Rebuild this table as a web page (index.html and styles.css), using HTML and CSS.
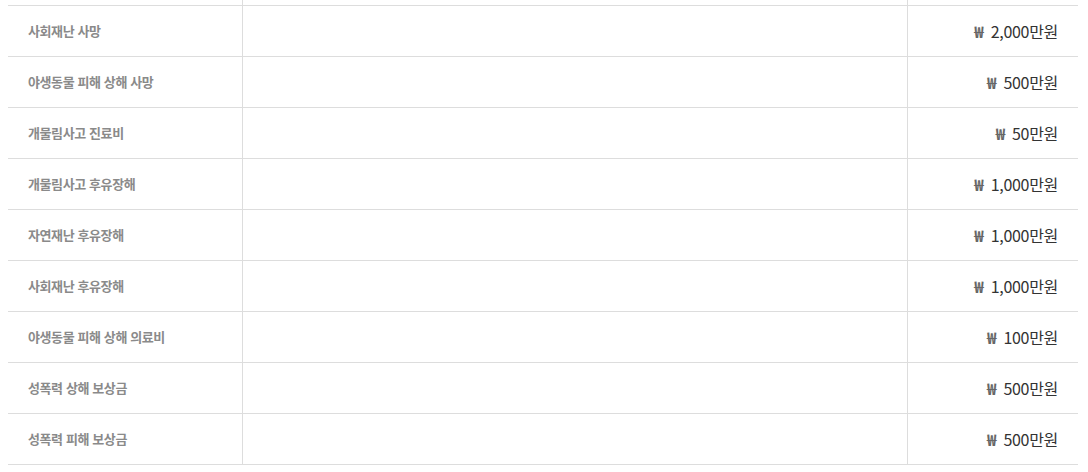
FILE: index.html
```html
<!DOCTYPE html>
<html lang="ko">
<head>
  <meta charset="UTF-8" />
  <title>보장내용</title>
  <link rel="stylesheet" href="styles.css">
</head>
<body>
  <table class="cover-table">
    <tbody>
      <tr class="cut-row">
        <td class="cov-name"></td>
        <td class="cov-desc"></td>
        <td class="cov-amount"></td>
      </tr>
      <tr>
        <td class="cov-name">사회재난 사망</td>
        <td class="cov-desc"></td>
        <td class="cov-amount"><span class="won">₩</span> 2,000만원</td>
      </tr>
      <tr>
        <td class="cov-name">야생동물 피해 상해 사망</td>
        <td class="cov-desc"></td>
        <td class="cov-amount"><span class="won">₩</span> 500만원</td>
      </tr>
      <tr>
        <td class="cov-name">개물림사고 진료비</td>
        <td class="cov-desc"></td>
        <td class="cov-amount"><span class="won">₩</span> 50만원</td>
      </tr>
      <tr>
        <td class="cov-name">개물림사고 후유장해</td>
        <td class="cov-desc"></td>
        <td class="cov-amount"><span class="won">₩</span> 1,000만원</td>
      </tr>
      <tr>
        <td class="cov-name">자연재난 후유장해</td>
        <td class="cov-desc"></td>
        <td class="cov-amount"><span class="won">₩</span> 1,000만원</td>
      </tr>
      <tr>
        <td class="cov-name">사회재난 후유장해</td>
        <td class="cov-desc"></td>
        <td class="cov-amount"><span class="won">₩</span> 1,000만원</td>
      </tr>
      <tr>
        <td class="cov-name">야생동물 피해 상해 의료비</td>
        <td class="cov-desc"></td>
        <td class="cov-amount"><span class="won">₩</span> 100만원</td>
      </tr>
      <tr>
        <td class="cov-name">성폭력 상해 보상금</td>
        <td class="cov-desc"></td>
        <td class="cov-amount"><span class="won">₩</span> 500만원</td>
      </tr>
      <tr>
        <td class="cov-name">성폭력 피해 보상금</td>
        <td class="cov-desc"></td>
        <td class="cov-amount"><span class="won">₩</span> 500만원</td>
      </tr>
    </tbody>
  </table>
</body>
</html>
```

FILE: styles.css
```css
body {
  margin: 0;
  padding: 0 10px 0 8px;
  background: #fff;
  font-family: "Noto Sans CJK KR", "Noto Sans", sans-serif;
}

.cover-table {
  width: 1070px;
  border-collapse: collapse;
  table-layout: fixed;
}

.cover-table td {
  height: 51px;
  padding: 0 20px;
  border-bottom: 1px solid #ddd;
  vertical-align: middle;
  box-sizing: border-box;
}

.cover-table tr.cut-row td {
  height: 5px;
  padding: 0;
}

.cov-name {
  width: 234px;
  border-right: 1px solid #ddd;
  font-size: 13px;
  font-weight: bold;
  color: #8a8a8a;
  letter-spacing: -0.4px;
}

.cov-desc {
  width: 665px;
  border-right: 1px solid #ddd;
}

.cov-amount {
  text-align: right;
  font-size: 16px;
  color: #333;
  letter-spacing: -0.3px;
}

.won {
  font-weight: bold;
  color: #666;
  margin-right: 3px;
}
```
